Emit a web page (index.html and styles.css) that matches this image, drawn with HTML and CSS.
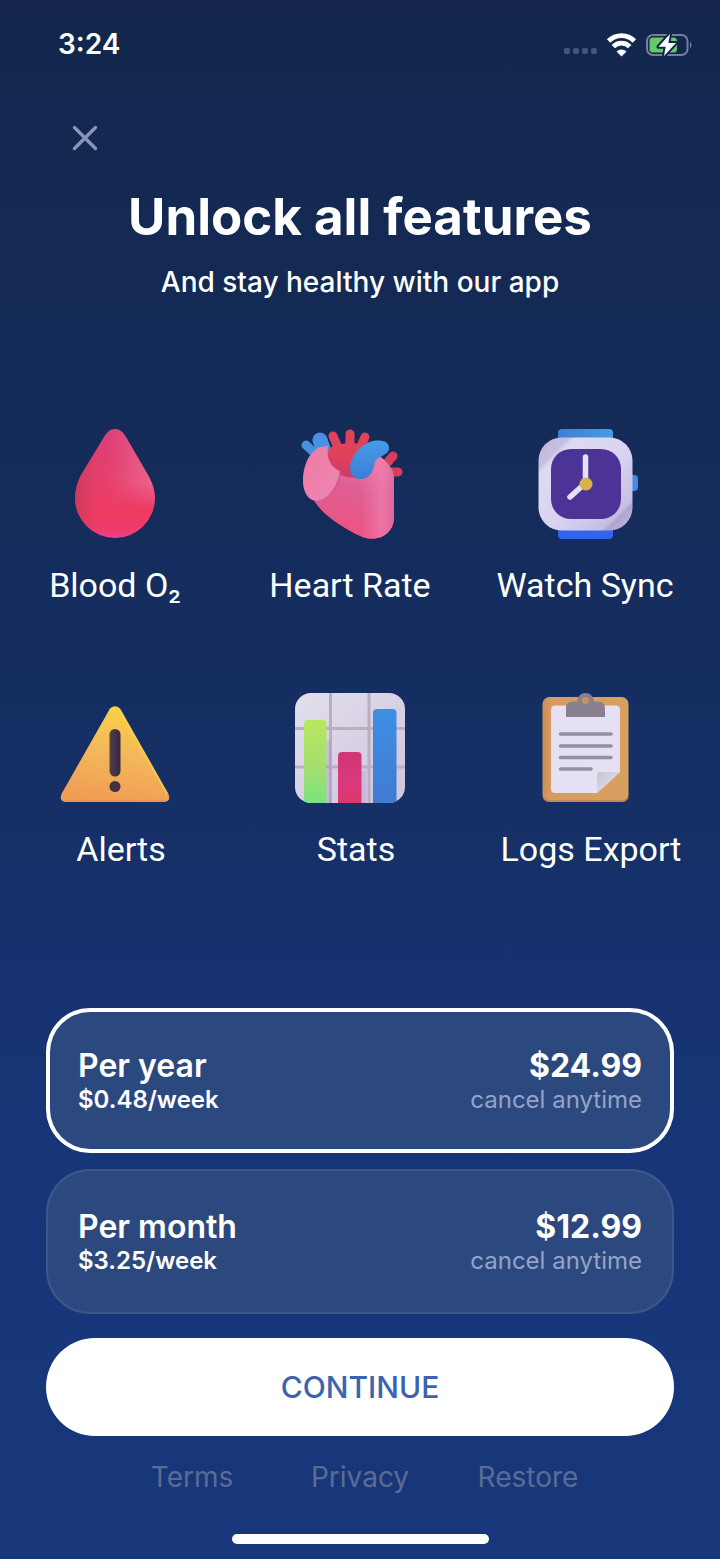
FILE: index.html
```html
<!DOCTYPE html>
<html lang="en">
<head>
<meta charset="utf-8">
<meta name="viewport" content="width=device-width, initial-scale=1">
<title>Unlock all features</title>
<link rel="stylesheet" href="styles.css">
</head>
<body>
<div class="screen">
  <header class="status">
    <span class="time">3:24</span>
    <svg class="status-icons" width="130" height="28" viewBox="0 0 130 28" aria-hidden="true">
      <g fill="#45557c"><rect x="0" y="18" width="6" height="6" rx="2"/><rect x="9" y="18" width="6" height="6" rx="2"/><rect x="18" y="18" width="6" height="6" rx="2"/><rect x="27" y="18" width="6" height="6" rx="2"/></g>
      <g fill="none" stroke="#fff" stroke-width="4.800"><path d="M44.600 11a18 18 0 0 1 25.800 0"/><path d="M49.300 16.700a11.300 11.300 0 0 1 16.400 0"/></g>
      <path d="M57.500 26.500l-5-5.100a7.200 7.200 0 0 1 10 0z" fill="#fff"/>
      <rect x="83" y="5" width="40.500" height="20" rx="6" fill="none" stroke="#72809f" stroke-width="2"/>
      <path d="M126 11.500q3 3.500 0 7z" fill="#72809f"/>
      <rect x="85.500" y="7.500" width="27.500" height="15" rx="3.500" fill="#65c968"/>
      <path d="M106 4L94.500 16.700h7.200L100 26l12-13.100h-7.600z" fill="#fff" stroke="#13264d" stroke-width="4" paint-order="stroke" stroke-linejoin="round"/>
    </svg>
  </header>

  <main class="content">
    <button class="close" type="button" aria-label="Close">
      <svg width="26" height="26" viewBox="0 0 26 26" aria-hidden="true"><path d="M2.500 2.500l21 21M23.500 2.500l-21 21" stroke="#8796b4" stroke-width="3.400" stroke-linecap="round"/></svg>
    </button>
    <h1 class="title">Unlock all features</h1>
    <p class="subtitle">And stay healthy with our app</p>

    <ul class="features">
      <li class="feature">
        <svg class="art" viewBox="0 0 110 110" aria-hidden="true">
          <defs>
            <linearGradient id="dropBase" x1="0" y1="0" x2="0" y2="1"><stop offset="0" stop-color="#dc3e79"/><stop offset=".45" stop-color="#e63f6c"/><stop offset=".8" stop-color="#ef3b60"/><stop offset=".95" stop-color="#ee3c70"/><stop offset="1" stop-color="#ee429a"/></linearGradient>
            <linearGradient id="dropSide" x1="0" y1="0" x2="1" y2="0"><stop offset="0" stop-color="#b23a5c" stop-opacity=".65"/><stop offset=".3" stop-color="#d83a60" stop-opacity="0"/></linearGradient>
            <linearGradient id="dropGlow" x1=".4" y1="0" x2=".95" y2="0"><stop offset="0" stop-color="#ec6a92" stop-opacity="0"/><stop offset="1" stop-color="#ec6a92" stop-opacity=".8"/></linearGradient>
            <linearGradient id="dropFade" x1="0" y1="0" x2="0" y2="1"><stop offset=".5" stop-color="#fff"/><stop offset=".72" stop-color="#000"/></linearGradient>
            <mask id="dropMask"><rect width="110" height="110" fill="url(#dropFade)"/></mask>
            <path id="drop" d="M55 0C50 0 47 3 44 8L21 46C17 54 15 61 15 69A40 40 0 0 0 95 69C95 61 92 53 88 46L66 8C63 3 60 0 55 0Z"/>
          </defs>
          <use href="#drop" fill="url(#dropBase)"/>
          <use href="#drop" fill="url(#dropSide)"/>
          <g mask="url(#dropMask)"><use href="#drop" fill="url(#dropGlow)"/></g>
        </svg>
        <span class="label">Blood O₂</span>
      </li>
      <li class="feature">
        <svg class="art" viewBox="0 0 110 110" aria-hidden="true">
          <defs>
            <linearGradient id="heartBody" x1=".7" y1="0" x2=".4" y2="1"><stop offset="0" stop-color="#ec7aa8"/><stop offset=".45" stop-color="#de5f92"/><stop offset="1" stop-color="#ed5282"/></linearGradient>
            <linearGradient id="heartShine" x1="0" y1="0" x2="1" y2="0"><stop offset=".6" stop-color="#ef7fae" stop-opacity="0"/><stop offset=".85" stop-color="#ef7fae" stop-opacity=".7"/><stop offset="1" stop-color="#dc6a9e" stop-opacity=".8"/></linearGradient>
            <linearGradient id="atrium" x1="0" y1="0" x2="1" y2="1"><stop offset="0" stop-color="#ee7aa6"/><stop offset="1" stop-color="#ef86b2"/></linearGradient>
            <linearGradient id="vein" x1="0" y1="0" x2="0" y2="1"><stop offset="0" stop-color="#479be9"/><stop offset="1" stop-color="#3c7ed6"/></linearGradient>
            <linearGradient id="aorta" x1="0" y1="0" x2="0" y2="1"><stop offset="0" stop-color="#e6425a"/><stop offset="1" stop-color="#ce3c68"/></linearGradient>
          </defs>
          <g fill="none" stroke-linecap="round">
            <path d="M29 22L25 11" stroke="#4791e2" stroke-width="15"/>
            <path d="M24 28L11 16" stroke="#4791e2" stroke-width="9"/>
            <path d="M87 40L98 27M91 43L103 43" stroke="#d73e5a" stroke-width="9"/>
          </g>
          <path id="ventricle" d="M51 24C67 18 87 24 95 38C99 43 99 48 99 58V88C99 104 85 112 71 109C60 106 22 85 17 66L35 26Z" fill="url(#heartBody)"/>
          <use href="#ventricle" fill="url(#heartShine)"/>
          <path d="M51 24C67 18 87 24 95 38C99 43 99 48 99 58V88C99 104 85 112 71 109C60 106 22 85 17 66L35 26Z" fill="url(#heartShine)"/>
          <path d="M34 20C40 14 63 11 78 20L62 48C54 50 40 46 36 38C32 32 32 26 34 20Z" fill="url(#aorta)"/>
          <path d="M47 28L38 7M55 28L55 5M61 28L70 8" fill="none" stroke="#df4259" stroke-width="9" stroke-linecap="round"/>
          <path d="M33 17C19 16 8 31 8 52C8 64 14 73 24 72C36 70 45 52 45 42C35 38 31 28 33 17Z" fill="url(#atrium)"/>
          <path d="M24 72C36 70 45 52 45 42" fill="none" stroke="#c84881" stroke-opacity=".4" stroke-width="2"/>
          <path d="M87 12C73 9 60 21 56 33C52 45 60 51 67 50C77 49 78 40 80 33C82 27 94 27 94 19C94 15 91 12 87 12Z" fill="url(#vein)"/>
        </svg>
        <span class="label">Heart Rate</span>
      </li>
      <li class="feature">
        <svg class="art" viewBox="0 0 110 110" aria-hidden="true">
          <defs>
            <linearGradient id="caseFill" x1="0" y1="0" x2="1" y2="1"><stop offset="0" stop-color="#bdb6d9"/><stop offset=".16" stop-color="#c6bfe1"/><stop offset=".2" stop-color="#dedaf3"/><stop offset=".55" stop-color="#d8d3f0"/><stop offset=".83" stop-color="#c7bfe3"/><stop offset=".86" stop-color="#aea6d2"/><stop offset="1" stop-color="#c1badf"/></linearGradient>
            <linearGradient id="strapTop" x1="0" y1="0" x2="1" y2="0"><stop offset="0" stop-color="#3c7fd4"/><stop offset="1" stop-color="#489be6"/></linearGradient>
          </defs>
          <rect x="28" y="0" width="55" height="20" rx="4" fill="url(#strapTop)"/>
          <rect x="28" y="90" width="55" height="20" rx="4" fill="#3463ee"/>
          <rect x="96" y="46" width="12" height="16" rx="4" fill="#408be3"/>
          <rect x="8.500" y="8.500" width="94" height="93" rx="23" fill="url(#caseFill)"/>
          <rect x="21" y="20" width="70" height="70" rx="20" fill="#4c3396"/>
          <path d="M55.500 54V28M55.500 54L40 68" stroke="#e8e0fb" stroke-width="5.500" stroke-linecap="round"/>
          <circle cx="56" cy="55" r="6.500" fill="#d9b24e"/>
        </svg>
        <span class="label">Watch Sync</span>
      </li>
      <li class="feature feature-indented">
        <svg class="art" viewBox="0 0 110 110" aria-hidden="true">
          <defs>
            <linearGradient id="warn" x1=".6" y1="0" x2=".4" y2="1"><stop offset="0" stop-color="#fad247"/><stop offset=".5" stop-color="#f4b75b"/><stop offset="1" stop-color="#f09c55"/></linearGradient>
            <linearGradient id="mark" x1="0" y1="0" x2="1" y2="0"><stop offset="0" stop-color="#5b4047"/><stop offset=".5" stop-color="#423447"/><stop offset="1" stop-color="#35293c"/></linearGradient>
          </defs>
          <path d="M50 15.500Q55 11 60 15.500L108.500 101Q111 108 105 109H5Q-1 108 1.500 101Z" fill="url(#warn)"/>
          <path d="M60 17.500L107 101" stroke="#fbd64d" stroke-opacity=".6" stroke-width="2"/>
          <path d="M4 108H106" stroke="#e98553" stroke-opacity=".5" stroke-width="2"/>
          <rect x="49.500" y="36" width="11" height="47.500" rx="5.500" fill="url(#mark)"/>
          <circle cx="55" cy="93.500" r="5.500" fill="#443342"/>
        </svg>
        <span class="label">Alerts</span>
      </li>
      <li class="feature feature-indented">
        <svg class="art" viewBox="0 0 110 110" aria-hidden="true">
          <defs>
            <clipPath id="chartClip"><rect width="110" height="110" rx="16"/></clipPath>
            <linearGradient id="chartBg" x1="0" y1="0" x2="1" y2="1"><stop offset="0" stop-color="#e3dfec"/><stop offset="1" stop-color="#cec4df"/></linearGradient>
            <linearGradient id="barGreen" x1="0" y1="0" x2="0" y2="1"><stop offset="0" stop-color="#b7e85e"/><stop offset=".5" stop-color="#a5de6f"/><stop offset="1" stop-color="#69e684"/></linearGradient>
            <linearGradient id="barRed" x1="0" y1="0" x2="0" y2="1"><stop offset="0" stop-color="#d23674"/><stop offset=".5" stop-color="#d93a7d"/><stop offset="1" stop-color="#e2355a"/></linearGradient>
            <linearGradient id="barBlue" x1="0" y1="0" x2="0" y2="1"><stop offset="0" stop-color="#3d8fe4"/><stop offset="1" stop-color="#4277ce"/></linearGradient>
          </defs>
          <g clip-path="url(#chartClip)">
            <rect width="110" height="110" fill="url(#chartBg)"/>
            <path d="M35.500 0V110M74 0V110M0 35.500H110M0 74H110" stroke="#b9afbf" stroke-width="3"/>
            <path d="M32 48V110M67 78V110" stroke="#a080cc" stroke-opacity=".25" stroke-width="8"/>
            <rect x="9" y="27" width="22.500" height="95" rx="4" fill="url(#barGreen)"/>
            <rect x="43" y="59" width="23.500" height="65" rx="4" fill="url(#barRed)"/>
            <rect x="78" y="16" width="23.500" height="110" rx="4" fill="url(#barBlue)"/>
          </g>
        </svg>
        <span class="label">Stats</span>
      </li>
      <li class="feature feature-indented">
        <svg class="art" viewBox="0 0 110 110" aria-hidden="true">
          <defs>
            <linearGradient id="board" x1="0" y1="0" x2="1" y2="0"><stop offset="0" stop-color="#cc8d5c"/><stop offset=".1" stop-color="#d99a60"/><stop offset="1" stop-color="#d9a05f"/></linearGradient>
            <linearGradient id="fold" x1="0" y1="0" x2="1" y2="1"><stop offset="0" stop-color="#c7c3d2"/><stop offset=".5" stop-color="#d8d4e1"/></linearGradient>
          </defs>
          <rect x="12.500" y="4" width="86" height="105" rx="7" fill="url(#board)"/>
          <path d="M14 105.500Q15 108 20 108H92Q97 108 98 104" fill="none" stroke="#b9775a" stroke-opacity=".6" stroke-width="2"/>
          <path d="M25 12.500H86Q90 12.500 90 17V79L67 100H25Q21 100 21 96V17Q21 12.500 25 12.500Z" fill="#e5e0f3"/>
          <path d="M90 79L67 100V82Q67 79 70 79Z" fill="url(#fold)"/>
          <path d="M30.500 41H81M30.500 53H81M30.500 64.500H81M30.500 76H61" stroke="#95909f" stroke-width="3.600" stroke-linecap="round"/>
          <path d="M36 24V15Q36 8.500 42.500 8.500H47A8.500 8.500 0 0 1 64 8.500H68Q75 8.500 75 15V24Z" fill="#88808f"/>
          <circle cx="55.500" cy="7.500" r="3.500" fill="#c59169"/>
        </svg>
        <span class="label">Logs Export</span>
      </li>
    </ul>

    <form class="purchase">
      <label class="plan">
        <input class="plan-input" type="radio" name="plan" value="year" checked>
        <span class="plan-side"><strong class="plan-main">Per year</strong><span class="plan-week">$0.48/week</span></span>
        <span class="plan-side plan-price"><strong class="plan-main">$24.99</strong><span class="plan-note">cancel anytime</span></span>
      </label>
      <label class="plan">
        <input class="plan-input" type="radio" name="plan" value="month">
        <span class="plan-side"><strong class="plan-main">Per month</strong><span class="plan-week">$3.25/week</span></span>
        <span class="plan-side plan-price"><strong class="plan-main">$12.99</strong><span class="plan-note">cancel anytime</span></span>
      </label>
      <button class="continue" type="button">CONTINUE</button>
    </form>
  </main>

  <nav class="links">
    <a class="link" href="#terms">Terms</a>
    <a class="link" href="#privacy">Privacy</a>
    <a class="link" href="#restore">Restore</a>
  </nav>
  <div class="home-bar"></div>
</div>
</body>
</html>
```
FILE: styles.css
```css
* {
  box-sizing: border-box;
}

body {
  margin: 0;
  font-family: Inter, "Liberation Sans", sans-serif;
  color: #fff;
}

.screen {
  display: flex;
  flex-direction: column;
  min-height: 100vh;
  background: linear-gradient(#13254a 0, #13284f 80px, #142b58 420px, #163068 850px, #17367a 1200px, #17377a 100%);
}

.status {
  display: flex;
  justify-content: space-between;
  align-items: center;
  padding: 28px 26px 0 58px;
}

.time {
  font-size: 28px;
  line-height: 32px;
  font-weight: 600;
}

.status-icons {
  display: block;
}

.content {
  display: flex;
  flex-direction: column;
}

.close {
  align-self: flex-start;
  display: flex;
  margin: 57px 0 0 64px;
  padding: 8px;
  border: 0;
  background: none;
  cursor: pointer;
}

.title {
  margin: 26px 0 0;
  font-size: 51px;
  line-height: 64px;
  font-weight: 700;
  text-align: center;
}

.subtitle {
  margin: 16px 0 0;
  font-size: 28px;
  line-height: 34px;
  font-weight: 500;
  text-align: center;
}

.features {
  display: grid;
  grid-template-columns: repeat(3, minmax(0, 1fr));
  gap: 88px 45px;
  margin: 130px 0 0;
  padding: 0 40px 0 20px;
  list-style: none;
}

.feature {
  display: flex;
  flex-direction: column;
  align-items: center;
  gap: 26px;
}

.art {
  width: 110px;
  height: 110px;
}

.label {
  font-family: Roboto, Inter, sans-serif;
  font-size: 34px;
  line-height: 40px;
  font-weight: 400;
  white-space: nowrap;
}

.feature-indented .label {
  padding-left: 12px;
}

.purchase {
  display: flex;
  flex-direction: column;
  gap: 16px;
  margin: 139px 46px 0;
}

.plan {
  display: flex;
  justify-content: space-between;
  align-items: center;
  padding: 39px 32px 38px;
  border-radius: 44px;
  background: #2c497f;
  box-shadow: inset 0 0 0 2px #3e5788;
  cursor: pointer;
}

.plan:has(.plan-input:checked) {
  box-shadow: inset 0 0 0 4px #fff;
}

.plan-input {
  appearance: none;
  position: absolute;
  margin: 0;
}

.plan-side {
  display: flex;
  flex-direction: column;
}

.plan-price {
  align-items: flex-end;
}

.plan-main {
  font-size: 32px;
  line-height: 38px;
  font-weight: 600;
}

.plan-price .plan-main {
  font-weight: 700;
}

.plan-week,
.plan-note {
  font-size: 24px;
  line-height: 30px;
}

.plan-week {
  font-weight: 600;
}

.plan-note {
  color: #94a4c6;
}

.continue {
  margin-top: 8px;
  padding: 30px;
  border: 0;
  border-radius: 49px;
  background: #fff;
  color: #3a64b1;
  font-family: inherit;
  font-size: 30px;
  line-height: 38px;
  font-weight: 500;
  cursor: pointer;
}

.links {
  display: grid;
  grid-template-columns: repeat(3, 1fr);
  margin: 24px 108px 0;
}

.link {
  color: #5a6c94;
  font-size: 28px;
  line-height: 34px;
  text-align: center;
  text-decoration: none;
}

.home-bar {
  align-self: center;
  width: 257px;
  height: 10px;
  margin: 40px 0 15px;
  border-radius: 5px;
  background: #fff;
}
```
